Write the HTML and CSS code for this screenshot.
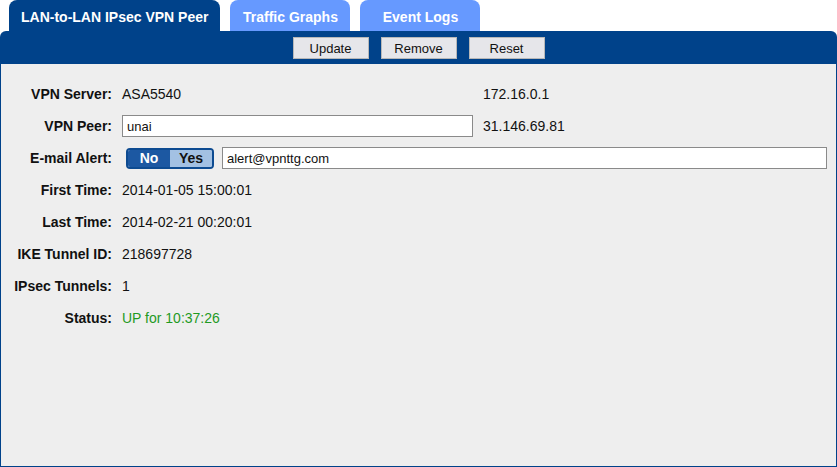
FILE: index.html
```html
<!DOCTYPE html>
<html lang="en">

<head>
  <meta charset="UTF-8" />
  <meta name="viewport" content="width=device-width, initial-scale=1.0" />
  <title>VPN Peer</title>
  <link rel="stylesheet" href="styles.css">
</head>

<body>
  <div class="tabs">
    <div class="tab active">LAN-to-LAN IPsec VPN Peer</div>
    <div class="tab">Traffic Graphs</div>
    <div class="tab">Event Logs</div>
  </div>
  <section class="panel">
    <div class="toolbar">
      <button class="btn">Update</button>
      <button class="btn">Remove</button>
      <button class="btn">Reset</button>
    </div>
    <div class="content">
      <div class="row">
        <label>VPN Server:</label>
        <span class="val wide">ASA5540</span>
        <span class="val">172.16.0.1</span>
      </div>
      <div class="row">
        <label>VPN Peer:</label>
        <input type="text" class="field peer" value="unai" />
        <span class="val">31.146.69.81</span>
      </div>
      <div class="row">
        <label>E-mail Alert:</label>
        <div class="toggle">
          <span class="on">No</span>
          <span class="off">Yes</span>
        </div>
        <input type="text" class="field mail" value="alert@vpnttg.com" />
      </div>
      <div class="row">
        <label>First Time:</label>
        <span class="val">2014-01-05 15:00:01</span>
      </div>
      <div class="row">
        <label>Last Time:</label>
        <span class="val">2014-02-21 00:20:01</span>
      </div>
      <div class="row">
        <label>IKE Tunnel ID:</label>
        <span class="val">218697728</span>
      </div>
      <div class="row">
        <label>IPsec Tunnels:</label>
        <span class="val">1</span>
      </div>
      <div class="row">
        <label>Status:</label>
        <span class="val up">UP for 10:37:26</span>
      </div>
    </div>
  </section>
</body>

</html>
```

FILE: styles.css
```css
* {
  margin: 0;
  padding: 0;
  box-sizing: border-box;
}

body {
  font-family: "Liberation Sans", Arial, sans-serif;
  font-size: 13px;
  color: #111;
  background-color: #fff;
  width: 837px;
  height: 467px;
  overflow: hidden;
}

.tabs {
  display: flex;
  gap: 10px;
  height: 31px;
  padding-left: 9px;
}

.tab {
  min-width: 120px;
  height: 31px;
  padding: 9px 12px 0;
  text-align: center;
  font-size: 14px;
  font-weight: bold;
  color: #fff;
  background-color: #6699ff;
  border-radius: 8px 8px 0 0;
}

.tab.active {
  background-color: #00428a;
}

.panel {
  height: 436px;
  display: flex;
  flex-direction: column;
}

.toolbar {
  height: 33px;
  display: flex;
  justify-content: center;
  gap: 12px;
  padding-top: 6px;
  background-color: #00428a;
  border-radius: 6px 6px 0 0;
}

.btn {
  width: 76px;
  height: 22px;
  font-family: inherit;
  font-size: 13px;
  color: #111;
  background-color: #e6e6ea;
  border: 1px solid #b8b8b8;
}

.content {
  flex-grow: 1;
  background-color: #eeeeee;
  border: 1px solid #00428a;
  border-top: none;
  padding-top: 14px;
  font-size: 14px;
}

.row {
  display: flex;
  align-items: center;
  height: 32px;
}

.row label {
  width: 111px;
  margin-right: 10px;
  text-align: right;
  font-weight: bold;
  white-space: nowrap;
}

.val.wide {
  width: 361px;
}

.field {
  height: 22px;
  padding: 0 4px;
  font-family: inherit;
  font-size: 13px;
  color: #111;
  background-color: #fff;
  border: 1px solid #8a8a8a;
}

.peer {
  width: 351px;
  margin-right: 10px;
}

.mail {
  width: 605px;
}

.toggle {
  display: flex;
  width: 88px;
  height: 21px;
  margin-left: 4px;
  margin-right: 8px;
  border: 2px solid #0d4b91;
  border-radius: 4px;
  overflow: hidden;
  font-weight: bold;
  font-size: 14px;
}

.toggle span {
  display: flex;
  align-items: center;
  justify-content: center;
}

.toggle .on {
  width: 42px;
  color: #fff;
  background-color: #1c58a2;
}

.toggle .off {
  flex-grow: 1;
  color: #111;
  background-color: #a3c1e3;
}

.up {
  color: #1f9a1f;
}
```
